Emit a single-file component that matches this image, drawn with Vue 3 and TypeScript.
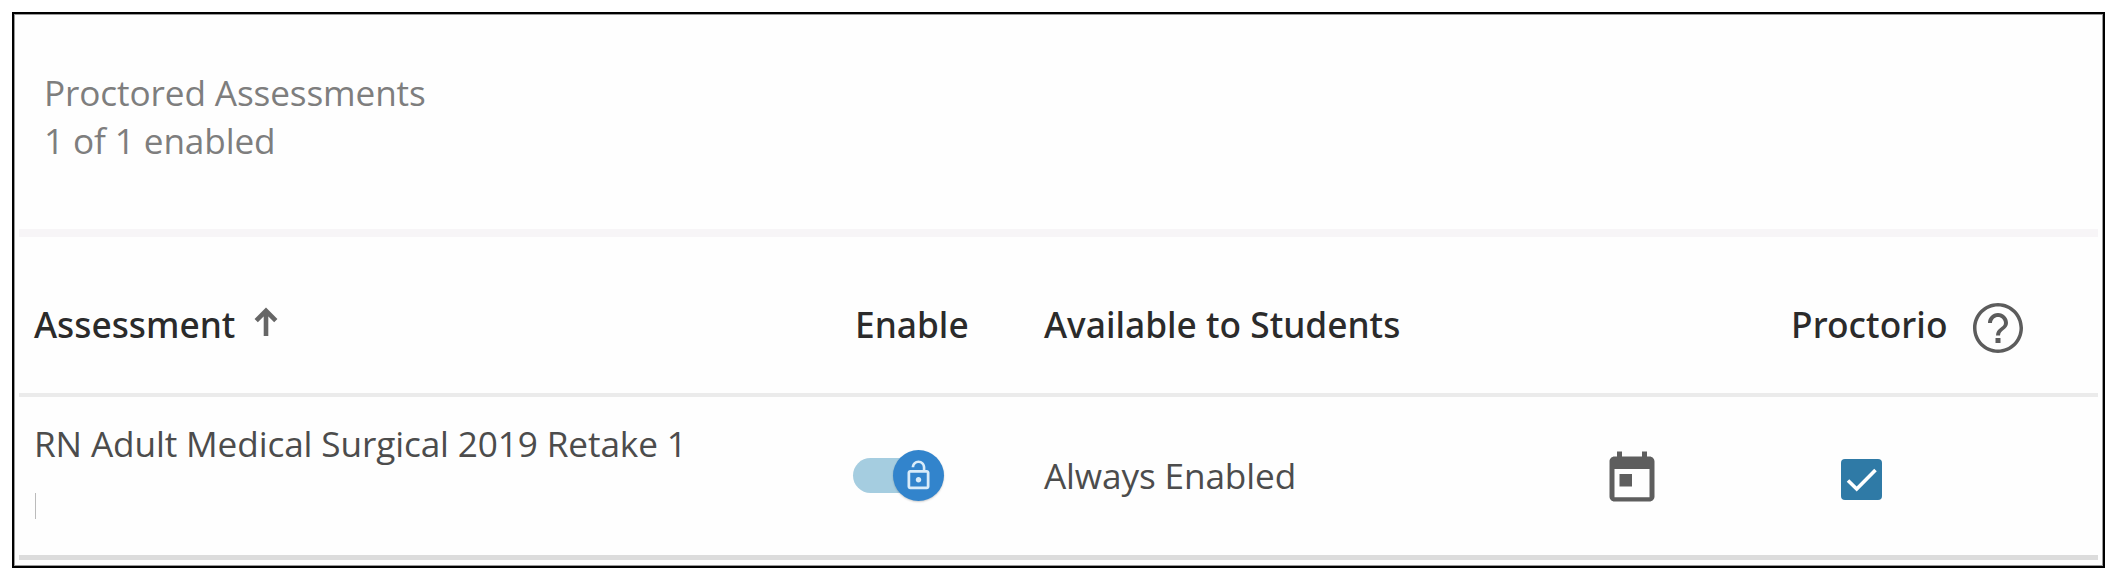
<script setup lang="ts">
interface Assessment {
  name: string
  enabled: boolean
  availability: string
  proctorio: boolean
}

const assessments: Assessment[] = [
  {
    name: 'RN Adult Medical Surgical 2019 Retake 1',
    enabled: true,
    availability: 'Always Enabled',
    proctorio: true,
  },
]

const enabledCount = assessments.filter((a) => a.enabled).length
</script>

<template>
  <main class="frame">
    <header class="summary">
      <div>Proctored Assessments</div>
      <div>{{ enabledCount }} of {{ assessments.length }} enabled</div>
    </header>

    <section class="table">
      <div class="row head">
        <div class="cell sort">
          <span>Assessment</span>
          <svg class="arrow" viewBox="0 0 26 30" aria-hidden="true">
            <path d="M13 29V3.5M3.2 13.6 13 3.8l9.800 9.800" />
          </svg>
        </div>
        <div class="cell enable">Enable</div>
        <div class="cell">Available to Students</div>
        <div class="cell"></div>
        <div class="cell proctorio">
          <span>Proctorio</span>
          <svg class="help" viewBox="0 0 24 24" aria-hidden="true">
            <path
              d="M11 18h2v-2h-2v2zm1-16C6.48 2 2 6.48 2 12s4.480 10 10 10 10-4.480 10-10S17.520 2 12 2zm0 18.600c-4.750 0-8.600-3.850-8.600-8.600S7.250 3.400 12 3.400s8.600 3.850 8.600 8.600-3.850 8.600-8.600 8.600zM12 6c-2.210 0-4 1.790-4 4h1.600c0-1.320 1.080-2.400 2.400-2.400s2.400 1.080 2.400 2.400c0 2-3.200 1.900-3.200 5h1.600c0-2.250 3.200-2.500 3.200-5 0-2.210-1.790-4-4-4z"
            />
          </svg>
        </div>
      </div>

      <div v-for="item in assessments" :key="item.name" class="row body">
        <div class="name">
          <div>{{ item.name }}</div>
          <div class="tick"></div>
        </div>
        <div class="toggle">
          <div class="track"></div>
          <div class="knob">
            <svg viewBox="0 0 24 24" aria-hidden="true">
              <path
                d="M12 17c1.100 0 2-.9 2-2s-.9-2-2-2-2 .9-2 2 .9 2 2 2zm6-9h-1V6c0-2.760-2.240-5-5-5S7 3.240 7 6h1.900c0-1.710 1.390-3.100 3.100-3.100 1.710 0 3.100 1.390 3.100 3.100v2H6c-1.100 0-2 .9-2 2v10c0 1.100.9 2 2 2h12c1.100 0 2-.9 2-2V10c0-1.100-.9-2-2-2zm0 12H6V10h12v10z"
              />
            </svg>
          </div>
        </div>
        <div class="status">{{ item.availability }}</div>
        <div class="date">
          <svg viewBox="0 0 24 24" aria-hidden="true">
            <path
              d="M19 3h-1V1h-2v2H8V1H6v2H5c-1.110 0-1.990.9-1.990 2L3 19c0 1.100.89 2 2 2h14c1.100 0 2-.9 2-2V5c0-1.100-.9-2-2-2zm0 16.300H5V8h14v11.300zM7 10h5v5H7z"
            />
          </svg>
        </div>
        <div class="check">
          <svg v-if="item.proctorio" viewBox="0 0 41 41" aria-hidden="true">
            <rect width="41" height="41" rx="4" />
            <path d="M7 21.500l8.700 8.500L34.500 11" />
          </svg>
        </div>
      </div>
    </section>
  </main>
</template>

<style>
body {
  margin: 0;
  background: #fff;
}
</style>

<style scoped>
.frame {
  box-sizing: border-box;
  width: 2093px;
  height: 556px;
  margin: 12px 0 0 12px;
  border: 2px solid #000;
  box-shadow: inset 0 0 0 1px #999;
  background: #fefefe;
  font-family: 'Open Sans', 'Noto Sans', sans-serif;
  font-size: 35.2px;
  line-height: 48px;
  letter-spacing: -0.13px;
  color: #4c4c4c;
  overflow: hidden;
  white-space: nowrap;
}

.summary {
  box-sizing: border-box;
  height: 223px;
  margin: 0 5px;
  padding: 54px 0 0 25px;
  border-bottom: 8px solid #f7f5f7;
  color: #7e7e7e;
}

.table {
  margin: 0 5px;
}

.row {
  display: grid;
  grid-template-columns: 820px 190px 558px 189px 1fr;
  box-sizing: border-box;
  padding-left: 15px;
}

.head {
  height: 160px;
  align-items: start;
  padding-top: 63px;
  border-bottom: 4px solid #ebebeb;
  font-family: 'Noto Sans', 'Open Sans', sans-serif;
  font-size: 35.3px;
  font-weight: 500;
  letter-spacing: 0;
  color: #2b2b2b;
}

.cell {
  display: flex;
}

.sort {
  gap: 18px;
}

.arrow {
  width: 26px;
  height: 30px;
  margin-top: 7px;
  fill: none;
  stroke: #666;
  stroke-width: 4.6;
}

.enable {
  padding-left: 1px;
}

.proctorio {
  letter-spacing: 0.1px;
}

.help {
  width: 60px;
  height: 60px;
  margin: -2px 0 -10px 20px;
  fill: #5c5c5c;
}

.body {
  height: 163px;
  align-items: start;
  border-bottom: 5px solid #dcdcdc;
}

.name {
  padding-top: 22px;
}

.tick {
  width: 1px;
  height: 26px;
  margin: 26px 0 0 1px;
  background: #bbb;
}

.toggle {
  display: flex;
  align-items: center;
  height: 52px;
  margin: 52px 0 0 -1px;
}

.track {
  width: 66px;
  height: 35px;
  border-radius: 18px;
  background: #a5cde0;
}

.knob {
  display: flex;
  align-items: center;
  justify-content: center;
  width: 51px;
  height: 51px;
  margin-left: -26px;
  border-radius: 50%;
  background: #3284cc;
  box-shadow: 0 1px 2px rgba(0, 0, 0, 0.2);
}

.knob svg {
  width: 33px;
  height: 33px;
  fill: #d9ecf9;
}

.status {
  padding-top: 54px;
}

.date {
  padding-top: 52px;
}

.date svg {
  display: block;
  width: 60px;
  height: 60px;
  fill: #5e5e5e;
}

.check {
  padding: 62px 0 0 50px;
}

.check svg {
  display: block;
  width: 41px;
  height: 41px;
}

.check rect {
  fill: #2f7aa6;
}

.check path {
  fill: none;
  stroke: #fff;
  stroke-width: 3.6;
}
</style>
